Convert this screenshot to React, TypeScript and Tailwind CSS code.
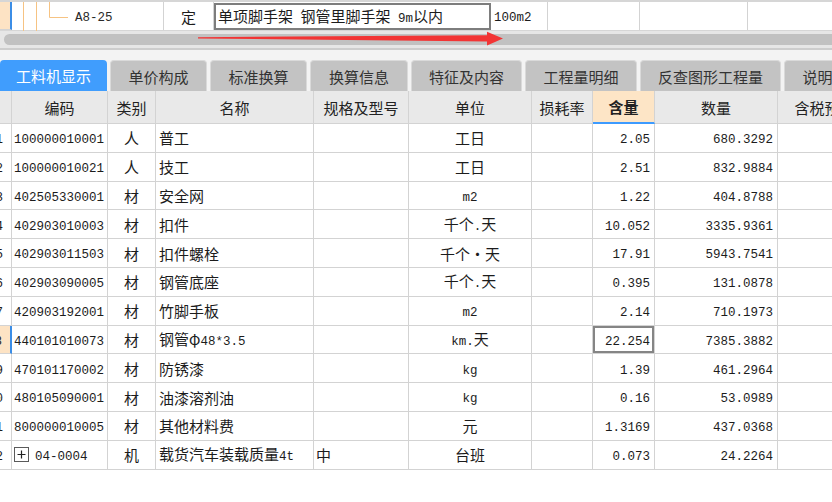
import React from "react";

const cols =
  "grid-cols-[12px_96px_48px_158px_95px_123px_61px_62px_123px_109px]";

const rows = [
  ["1", "100000010001", "人", "普工", "", "工日", "", "2.05", "680.3292"],
  ["2", "100000010021", "人", "技工", "", "工日", "", "2.51", "832.9884"],
  ["3", "402505330001", "材", "安全网", "", "m2", "", "1.22", "404.8788"],
  ["4", "402903010003", "材", "扣件", "", "千个.天", "", "10.052", "3335.9361"],
  ["5", "402903011503", "材", "扣件螺栓", "", "千个·天", "", "17.91", "5943.7541"],
  ["6", "402903090005", "材", "钢管底座", "", "千个.天", "", "0.395", "131.0878"],
  ["7", "420903192001", "材", "竹脚手板", "", "m2", "", "2.14", "710.1973"],
  ["8", "440101010073", "材", "钢管φ48*3.5", "", "km.天", "", "22.254", "7385.3882"],
  ["9", "470101170002", "材", "防锈漆", "", "kg", "", "1.39", "461.2964"],
  ["10", "480105090001", "材", "油漆溶剂油", "", "kg", "", "0.16", "53.0989"],
  ["11", "800000010005", "材", "其他材料费", "", "元", "", "1.3169", "437.0368"],
  ["12", "04-0004", "机", "载货汽车装载质量4t", "中", "台班", "", "0.073", "24.2264"],
];

const tabs = [
  { label: "工料机显示", w: "w-[107px]" },
  { label: "单价构成", w: "w-[97px]" },
  { label: "标准换算", w: "w-[97px]" },
  { label: "换算信息", w: "w-[98px]" },
  { label: "特征及内容", w: "w-[111px]" },
  { label: "工程量明细", w: "w-[112px]" },
  { label: "反查图形工程量", w: "w-[141px]" },
  { label: "说明信息", w: "w-[97px]" },
];

const heads = ["", "编码", "类别", "名称", "规格及型号", "单位", "损耗率", "含量", "数量", "含税预算价"];

// ascii runs get the narrow mono face, the rest stays CJK
function T({ s }: { s: string }) {
  const parts = s.match(/[\x20-\x7e]+|[^\x20-\x7e]+/g) ?? [];
  return (
    <span className="whitespace-pre">
      {parts.map((p, i) =>
        /^[\x20-\x7e]+$/.test(p) ? (
          <span key={i} className="font-['Liberation_Mono',monospace] text-[12.5px]">
            {p}
          </span>
        ) : p === "φ" ? (
          <span key={i} className="text-[#3c6fb5]">{p}</span>
        ) : (
          <span key={i}>{p}</span>
        )
      )}
    </span>
  );
}

function PlusBox() {
  return (
    <svg width="15" height="15" viewBox="0 0 15 15" className="shrink-0">
      <rect x="0.5" y="0.5" width="14" height="14" fill="#fff" stroke="#5a5a5a" />
      <path d="M3.5 7.5h8M7.5 3.5v8" stroke="#222" strokeWidth="1.2" />
    </svg>
  );
}

export default function App() {
  const cell = "border-r border-b border-[#d3d3d3] flex items-center overflow-hidden whitespace-nowrap";

  return (
    <div className="relative w-[832px] h-[502px] overflow-hidden bg-white text-[15px] text-[#1c1c1c] font-['Noto_Sans_CJK_SC',sans-serif] leading-none">
      {/* upper grid, last visible row */}
      <div className="grid grid-cols-[12px_152px_50px_277px_57px_92px_108px_84px] h-[31px] border-t-2 border-[#d6d6d6] border-b">
        <div className="bg-[#fde3c4] border-r-2 border-r-[#3b8de6] border-b border-b-[#d3d3d3]" />
        <div className="relative border-r border-[#d3d3d3] flex items-center pl-[63px]">
          <svg width="60" height="29" className="absolute left-0 top-0">
            <path d="M11.5 0v29M24.5 0v29M37.5 0v15.5H56" stroke="#f6c383" fill="none" />
          </svg>
          <span className="text-[#2a2a2a]"><T s="A8-25" /></span>
        </div>
        <div className="border-r border-[#d3d3d3] flex items-center justify-center">定</div>
        <div className="flex items-center pl-[4px] mt-[1px] shadow-[inset_0_0_0_2px_#7d7d7d] whitespace-nowrap">
          <T s="单项脚手架 钢管里脚手架 9m以内" />
        </div>
        <div className="border-r border-[#d3d3d3] flex items-center pl-[3px]"><T s="100m2" /></div>
        <div className="border-r border-[#d3d3d3]" />
        <div className="border-r border-[#d3d3d3]" />
        <div />
      </div>

      {/* horizontal scrollbar */}
      <div className="h-[19px] bg-[#e6e6e6] border-b-2 border-[#cdcdcd] flex pt-[3px] pb-[3px]">
        <div className="ml-[4px] flex-1 rounded-l-full bg-[#c1c1c1]" />
      </div>

      {/* tabs */}
      <div className="bg-[#f3f3f3] pt-[10px] flex gap-[3px] h-[41px]">
        {tabs.map((t, i) => (
          <div
            key={t.label}
            className={`${t.w} shrink-0 h-[31px] rounded-t-[4px] flex items-center justify-center whitespace-nowrap ${
              i === 0
                ? "bg-[#409dfd] text-white"
                : "bg-[#c3c3c3] text-[#333] border border-b-0 border-[#dadada]"
            }`}
          >
            {t.label}
          </div>
        ))}
      </div>

      {/* table header */}
      <div className={`grid ${cols} h-[33px] bg-[#e9e9e9]`}>
        {heads.map((h, i) => (
          <div
            key={i}
            className={`${cell} justify-center text-[#222] ${
              i === 7 ? "bg-[#fde5c6] font-bold border-b-2 border-b-[#3d9bff]" : ""
            }`}
          >
            {h}
          </div>
        ))}
      </div>

      {/* rows */}
      {rows.map((r, i) => {
        const sel = i === 7;
        return (
          <div key={i} className={`grid ${cols} h-[28.8px]`}>
            <div
              className={`${cell} justify-end pr-[8px] ${
                sel ? "bg-[#fde3c4] border-r-2 border-r-[#3b8de6]" : ""
              }`}
            >
              <T s={r[0]} />
            </div>
            <div className={`${cell} pl-[2px] gap-[6px]`}>
              {i === 11 && <PlusBox />}
              <T s={r[1]} />
            </div>
            <div className={`${cell} justify-center`}>{r[2]}</div>
            <div className={`${cell} pl-[3px]`}>
              <T s={r[3]} />
            </div>
            <div className={`${cell} pl-[2px]`}>{r[4]}</div>
            <div className={`${cell} justify-center`}>
              <T s={r[5]} />
            </div>
            <div className={cell} />
            <div
              className={`${cell} justify-end pr-[4px] ${
                sel ? "shadow-[inset_0_0_0_2px_#858585]" : ""
              }`}
            >
              <T s={r[7]} />
            </div>
            <div className={`${cell} justify-end pr-[4px]`}>
              <T s={r[8]} />
            </div>
            <div className={cell} />
          </div>
        );
      })}

      {/* red arrow drawn over the scrollbar */}
      <svg
        width="832"
        height="60"
        className="absolute left-0 top-0 pointer-events-none"
      >
        <path
          d="M198 37.2 L487 35.3 L487 31.7 L503 38.5 L487 45.6 L487 41.4 L198 38.4 Z"
          fill="#f23434"
        />
      </svg>
    </div>
  );
}
